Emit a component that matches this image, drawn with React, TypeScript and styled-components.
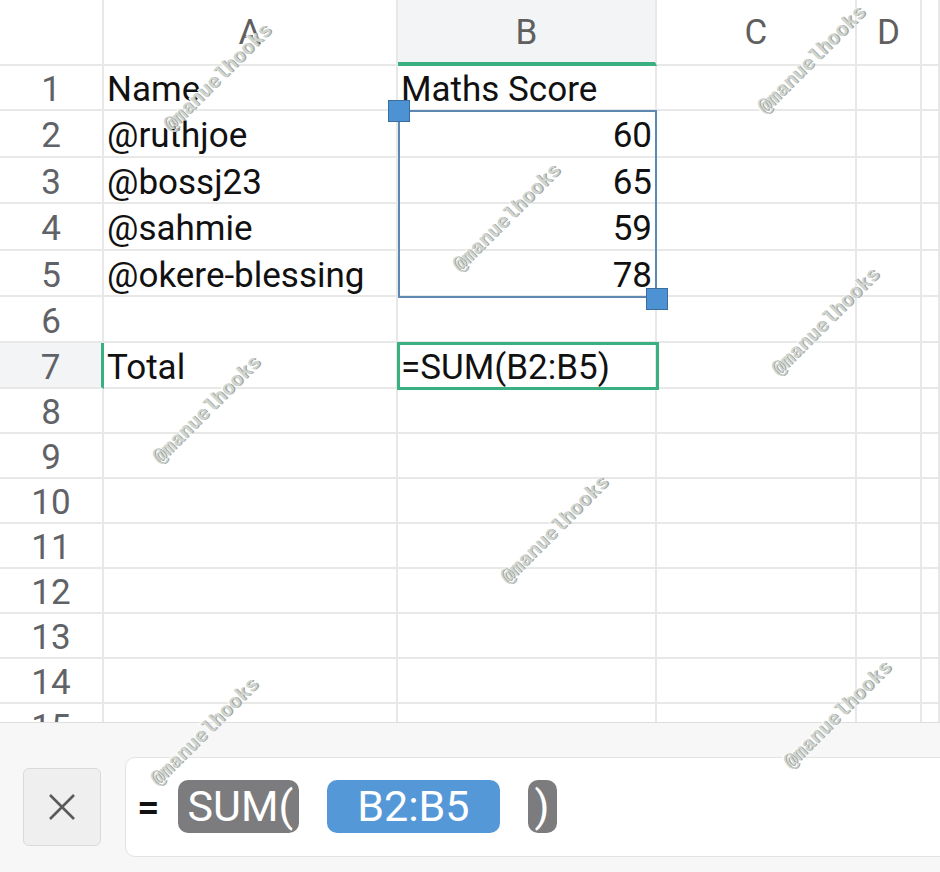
import { createGlobalStyle } from "styled-components";
import styled from "styled-components";

const GlobalStyle = createGlobalStyle`
	html, body {
		margin: 0;
		padding: 0;
		background: #ffffff;
	}
	body {
		font-family: Roboto, "Noto Sans", "Liberation Sans", sans-serif;
		overflow: hidden;
	}
`;

const COLS = [104, 294, 259, 200, 65];
const ROW_HEIGHTS = [45, 47, 46, 47, 46, 46, 46, 45, 45, 45, 45, 45, 45, 45, 45];
const GREEN = "#3aaf82";

const rows: { a?: string; b?: string; bAlign?: "left" | "right" }[] = [
	{ a: "Name", b: "Maths Score" },
	{ a: "@ruthjoe", b: "60", bAlign: "right" },
	{ a: "@bossj23", b: "65", bAlign: "right" },
	{ a: "@sahmie", b: "59", bAlign: "right" },
	{ a: "@okere-blessing", b: "78", bAlign: "right" },
	{},
	{ a: "Total", b: "=SUM(B2:B5)" },
];

const Page = styled.div`
	position: relative;
	width: 940px;
	height: 872px;
	overflow: hidden;
	display: flex;
	flex-direction: column;
	background: #fff;
`;

const Sheet = styled.div`
	position: relative;
	height: 722px;
	overflow: hidden;
	display: grid;
	grid-template-columns: ${COLS.map((c) => `${c}px`).join(" ")} 1fr;
	grid-template-rows: 66px ${ROW_HEIGHTS.map((r) => `${r}px`).join(" ")};
`;

const Corner = styled.div`
	border-right: 2px solid #e8e8e8;
	border-bottom: 2px solid #e8e8e8;
`;

const ColHeader = styled.div<{ $active?: boolean }>`
	display: flex;
	align-items: center;
	justify-content: center;
	font-size: 35px;
	color: #5f5f5f;
	background: ${({ $active }) => ($active ? "#f3f4f6" : "#fff")};
	border-right: 2px solid #e8e8e8;
	border-bottom: ${({ $active }) => ($active ? `4px solid ${GREEN}` : "2px solid #e8e8e8")};
	padding-top: ${({ $active }) => ($active ? "2px" : "0")};
`;

const RowHeader = styled.div<{ $active?: boolean }>`
	display: flex;
	align-items: center;
	justify-content: center;
	font-size: 35px;
	color: #5f6266;
	background: ${({ $active }) => ($active ? "#f3f4f6" : "#fff")};
	border-right: ${({ $active }) => ($active ? `3px solid ${GREEN}` : "2px solid #e8e8e8")};
	border-bottom: 2px solid #e8e8e8;
	padding-top: 4px;
	box-sizing: border-box;
`;

const Cell = styled.div<{ $align?: "left" | "right" }>`
	display: flex;
	align-items: center;
	justify-content: ${({ $align }) => ($align === "right" ? "flex-end" : "flex-start")};
	padding: 4px 3px 0 3px;
	font-size: 35px;
	color: #111;
	white-space: nowrap;
	overflow: visible;
	border-right: 2px solid #e8e8e8;
	border-bottom: 2px solid #e8e8e8;
	min-width: 0;
`;

const RangeBox = styled.div`
	position: absolute;
	left: 398px;
	top: 110px;
	width: 259px;
	height: 188px;
	box-sizing: border-box;
	border: 2px solid #5c88b2;
	pointer-events: none;
`;

const Handle = styled.div<{ $corner: "start" | "end" }>`
	position: absolute;
	width: 22px;
	height: 22px;
	box-sizing: border-box;
	background: #4d92d3;
	border: 1px solid #3b6e9c;
	left: ${({ $corner }) => ($corner === "start" ? "388px" : "646px")};
	top: ${({ $corner }) => ($corner === "start" ? "100px" : "288px")};
`;

const ActiveCell = styled.div`
	position: absolute;
	left: 397px;
	top: 342px;
	width: 262px;
	height: 48px;
	box-sizing: border-box;
	border: 3px solid ${GREEN};
	pointer-events: none;
`;

const Panel = styled.div`
	flex: 1;
	display: flex;
	align-items: center;
	gap: 24px;
	padding: 18px 0 0 23px;
	background: #f7f7f7;
	border-top: 1px solid #dedede;
`;

const CancelButton = styled.div`
	flex: none;
	width: 78px;
	height: 78px;
	box-sizing: border-box;
	display: flex;
	align-items: center;
	justify-content: center;
	background: #efefef;
	border: 1px solid #dadada;
	border-radius: 6px;
`;

const FormulaInput = styled.div`
	flex: 1;
	height: 100px;
	margin-right: -30px;
	box-sizing: border-box;
	display: flex;
	align-items: center;
	padding-left: 11px;
	background: #fff;
	border: 1px solid #e3e3e3;
	border-radius: 10px;
`;

const Equals = styled.span`
	font-size: 40px;
	font-weight: 500;
	color: #111;
	margin-right: 18px;
	margin-top: 2px;
`;

const Chip = styled.span<{ $tone: "fn" | "ref"; $pad: string }>`
	display: inline-flex;
	align-items: center;
	justify-content: center;
	height: 53px;
	box-sizing: border-box;
	padding: ${({ $pad }) => $pad};
	margin-right: 28px;
	border-radius: 10px;
	background: ${({ $tone }) => ($tone === "ref" ? "#5598d8" : "#7c7c7e")};
	color: #fff;
	font-size: 43px;
	line-height: 1;
`;

const Watermark = styled.span`
	position: absolute;
	transform: translate(-50%, -50%) rotate(-45deg);
	font-family: "Liberation Mono", "DejaVu Sans Mono", monospace;
	font-weight: bold;
	font-size: 20px;
	color: #d0d5d0;
	text-shadow: 1px 1px 0 #9ea49e, -1px -1px 0 #ffffff;
	white-space: nowrap;
	pointer-events: none;
`;

const marks = [
	[218, 78],
	[812, 60],
	[507, 218],
	[826, 322],
	[207, 410],
	[555, 530],
	[205, 732],
	[838, 715],
];

const letters = ["A", "B", "C", "D", ""];

export default function App() {
	return (
		<>
			<GlobalStyle />
			<Page>
				<Sheet>
					<Corner />
					{letters.map((l) => (
						<ColHeader key={l || "E"} $active={l === "B"}>
							{l}
						</ColHeader>
					))}
					{ROW_HEIGHTS.map((_, i) => {
						const r = rows[i] || {};
						return [
							<RowHeader key={`h${i}`} $active={i === 6}>
								{i + 1}
							</RowHeader>,
							<Cell key={`a${i}`}>{r.a}</Cell>,
							<Cell key={`b${i}`} $align={r.bAlign}>
								{r.b}
							</Cell>,
							<Cell key={`c${i}`} />,
							<Cell key={`d${i}`} />,
							<Cell key={`e${i}`} />,
						];
					})}
					<RangeBox />
					<Handle $corner="start" />
					<Handle $corner="end" />
					<ActiveCell />
				</Sheet>
				<Panel>
					<CancelButton>
						<svg width="32" height="32" viewBox="0 0 32 32">
							<path d="M4 4 L28 28 M28 4 L4 28" stroke="#5a5a5a" strokeWidth="2.6" fill="none" />
						</svg>
					</CancelButton>
					<FormulaInput>
						<Equals>=</Equals>
						<Chip $tone="fn" $pad="0 6px 0 10px">SUM(</Chip>
						<Chip $tone="ref" $pad="0 30px">B2:B5</Chip>
						<Chip $tone="fn" $pad="0 7px">)</Chip>
					</FormulaInput>
				</Panel>
				{marks.map(([x, y], i) => (
					<Watermark key={i} style={{ left: x, top: y }}>
						@manuelhooks
					</Watermark>
				))}
			</Page>
		</>
	);
}
